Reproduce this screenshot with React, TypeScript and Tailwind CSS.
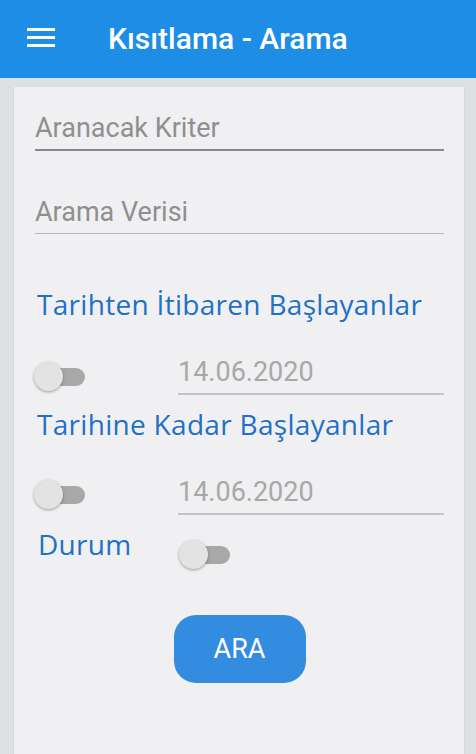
import React from "react";

const Toggle: React.FC<{ className?: string }> = ({ className = "" }) => (
  <div className={`relative w-[51px] h-[29px] flex items-center shrink-0 ${className}`}>
    <div className="ml-[6px] w-[45px] h-[18px] rounded-full bg-[#a8a8a8]" />
    <div className="absolute left-0 top-0 w-[29px] h-[29px] rounded-full bg-[#e3e3e3] shadow-[0_1px_3px_rgba(0,0,0,0.35)]" />
  </div>
);

const label =
  "text-[#2170c4] text-[28px] leading-[28px] tracking-[0.3px] font-['Open_Sans',sans-serif]";
const dateField =
  "ml-[93px] flex-1 leading-[27px] pb-[7px] border-b-2 border-[#c4c4c4] text-[#a8a8a8] text-[27px]";

const App: React.FC = () => {
  return (
    <div className="w-[476px] h-[754px] bg-[#dde1e1] flex flex-col overflow-hidden font-['Roboto',sans-serif]">
      {/* Toolbar */}
      <div className="h-[78px] bg-[#1e8de6] flex items-center shrink-0">
        <div className="ml-[27px] mb-[4px] w-[28px] flex flex-col gap-[5px]">
          <div className="h-[3px] bg-white" />
          <div className="h-[3px] bg-white" />
          <div className="h-[3px] bg-white" />
        </div>
        <div className="ml-[53px] text-white text-[30px] leading-[30px] font-medium">
          Kısıtlama - Arama
        </div>
      </div>

      {/* Card */}
      <div className="ml-[14px] mr-[12px] mt-[9px] flex-1 bg-[#f0f0f2] shadow-[0_1px_2px_rgba(0,0,0,0.1)] pl-[21px] pr-[20px] pt-[28px]">
        <div className="leading-[27px] pb-[7px] border-b-2 border-[#888888] text-[#8f8f8f] text-[27px]">
          Aranacak Kriter
        </div>
        <div className="mt-[48px] leading-[27px] pb-[7px] border-b border-[#b8b8b8] text-[#8f8f8f] text-[27px]">
          Arama Verisi
        </div>

        <div className={`${label} mt-[56px] ml-[2px]`}>Tarihten İtibaren Başlayanlar</div>
        <div className="mt-[41px] flex items-start">
          <Toggle className="mt-[3px] ml-[-1px]" />
          <div className={dateField}>14.06.2020</div>
        </div>

        <div className={`${label} mt-[15px] ml-[2px]`}>Tarihine Kadar Başlayanlar</div>
        <div className="mt-[41px] flex items-start">
          <Toggle className="mt-[1px] ml-[-1px]" />
          <div className={dateField}>14.06.2020</div>
        </div>

        <div className="flex items-start mt-[15px]">
          <div className={`${label} ml-[3px] w-[140px]`}>Durum</div>
          <Toggle className="mt-[10px] ml-[1px]" />
        </div>

        <div className="flex justify-center mt-[46px]">
          <button className="w-[132px] h-[68px] rounded-[22px] bg-[#348ce1] text-white text-[27px] leading-none">
            ARA
          </button>
        </div>
      </div>
    </div>
  );
};

export default App;
